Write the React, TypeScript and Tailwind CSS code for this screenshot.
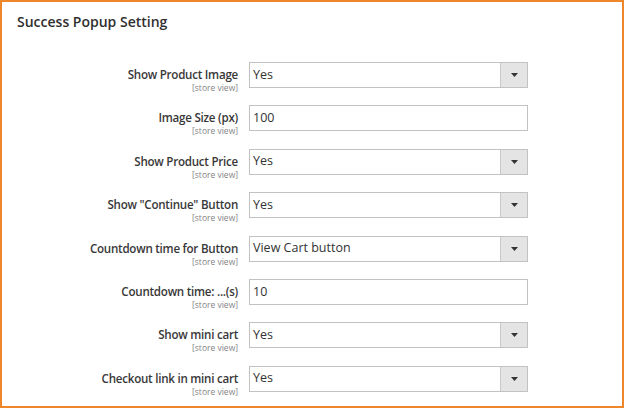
const rows: { label: string; value: string; kind: 'select' | 'input' }[] = [
  { label: 'Show Product Image', value: 'Yes', kind: 'select' },
  { label: 'Image Size (px)', value: '100', kind: 'input' },
  { label: 'Show Product Price', value: 'Yes', kind: 'select' },
  { label: 'Show "Continue" Button', value: 'Yes', kind: 'select' },
  { label: 'Countdown time for Button', value: 'View Cart button', kind: 'select' },
  { label: 'Countdown time: ...(s)', value: '10', kind: 'input' },
  { label: 'Show mini cart', value: 'Yes', kind: 'select' },
  { label: 'Checkout link in mini cart', value: 'Yes', kind: 'select' },
];

function Field({ value, kind }: { value: string; kind: 'select' | 'input' }) {
  return (
    <div className="flex h-[26px] w-[279px] border border-[#c2c2c2] bg-white">
      <div className="flex flex-1 items-center pl-[3px] text-[12.5px] text-[#333]">{value}</div>
      {kind === 'select' && (
        <div className="flex w-[27px] items-center justify-center border-l border-[#c8c8c8] bg-[#e4e4e4]">
          <svg width="7" height="4" viewBox="0 0 7 4">
            <path d="M0 0h7L3.5 4z" fill="#333" />
          </svg>
        </div>
      )}
    </div>
  );
}

export default function App() {
  return (
    <div
      className="h-[408px] w-[624px] border-2 border-[#f0862a] bg-white"
      style={{ fontFamily: '"Open Sans", sans-serif' }}
    >
      <h1 className="pl-[15px] pt-[9px] text-[14px] font-semibold text-[#303030]">Success Popup Setting</h1>
      <div className="pt-[30px]">
        {rows.map((row) => (
          <div key={row.label} className="flex h-[43.4px] items-start">
            <div className="flex w-[236px] flex-col items-end pt-[5px]">
              <span className="text-[11.6px] font-semibold leading-[16px] tracking-[-0.25px] text-[#383838]">
                {row.label}
              </span>
              <span className="text-[8.5px] leading-[9px] text-[#858585]">[store view]</span>
            </div>
            <div className="pl-[11px]">
              <Field value={row.value} kind={row.kind} />
            </div>
          </div>
        ))}
      </div>
    </div>
  );
}
